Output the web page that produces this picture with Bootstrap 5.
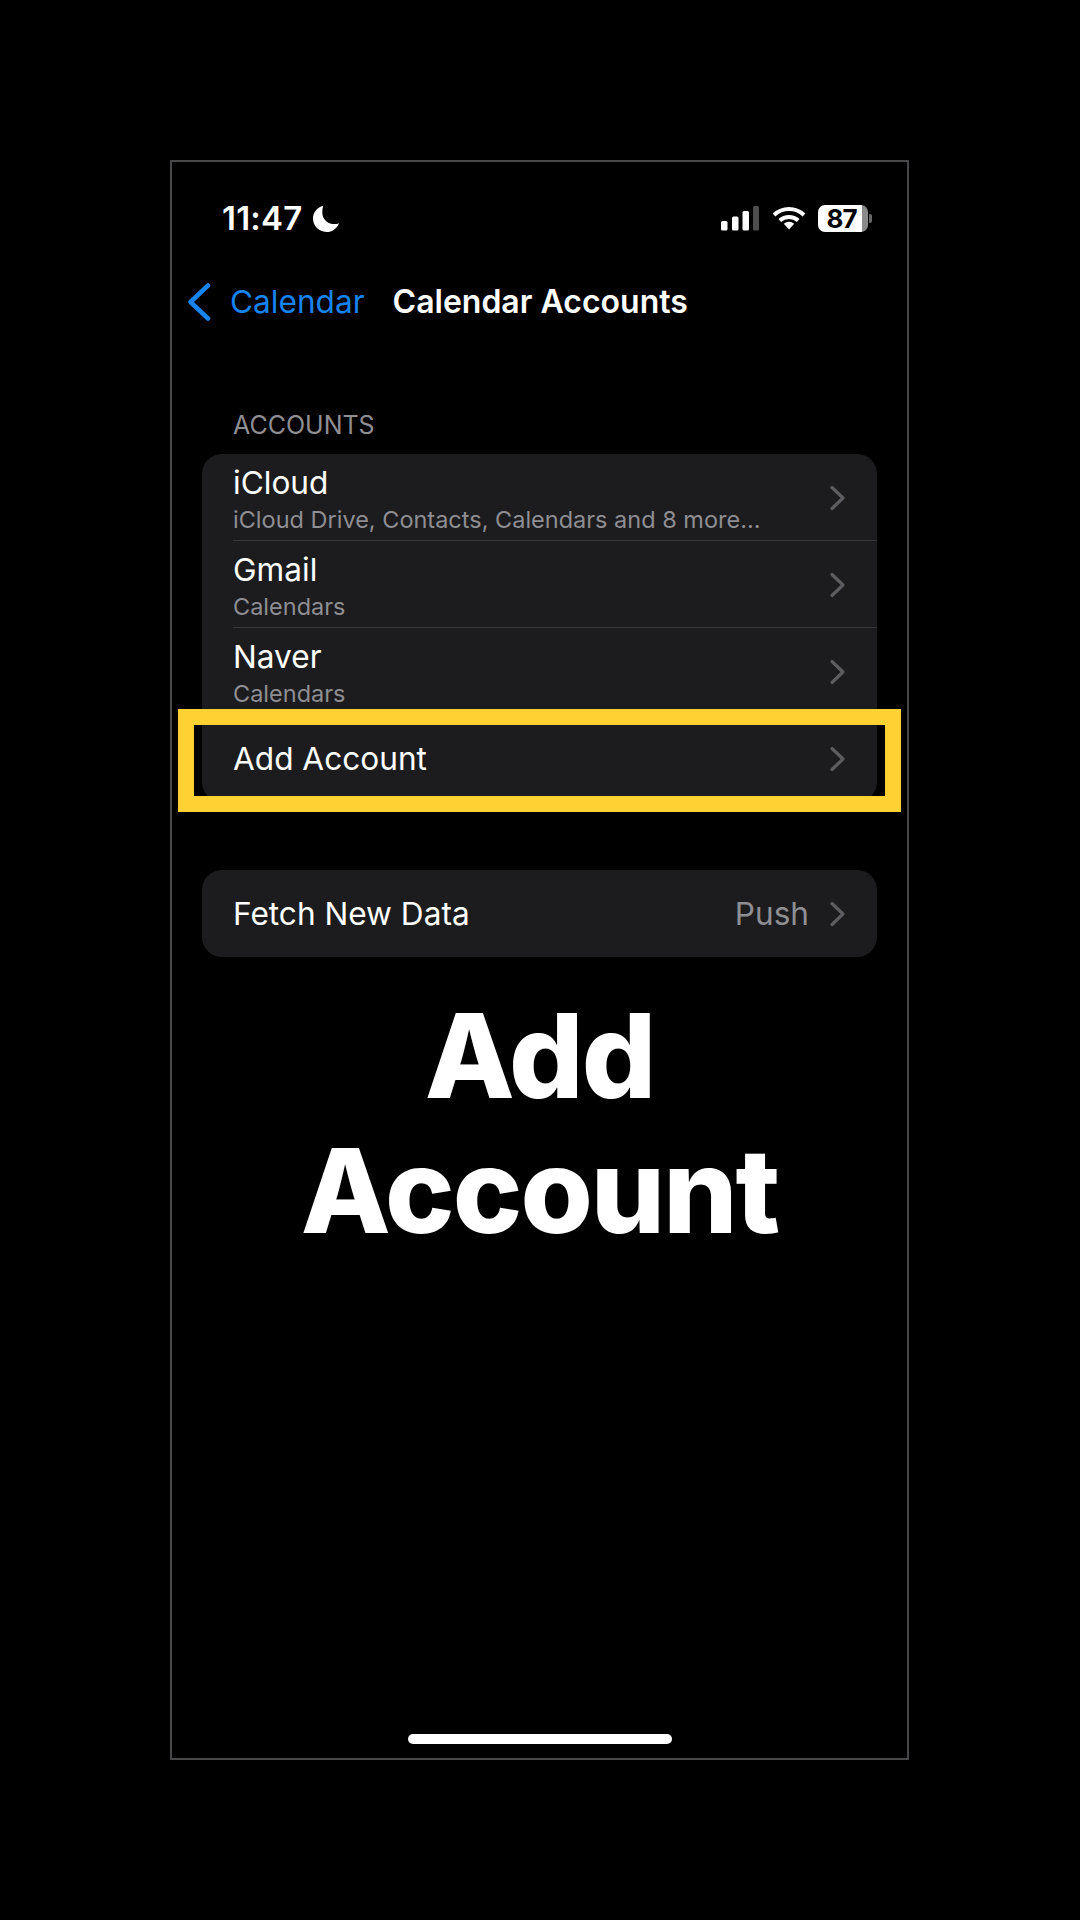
<!DOCTYPE html>
<html lang="en">
<head>
<meta charset="utf-8">
<title>Calendar Accounts</title>
<link href="https://cdn.jsdelivr.net/npm/bootstrap@5.3.0/dist/css/bootstrap.min.css" rel="stylesheet">
<style>
html,body{background:#000;height:1920px;}
body{font-family:Inter,"Liberation Sans",sans-serif;color:#fff;margin:0;overflow:hidden;}
.phone-frame{width:739px;height:1600px;margin:160px 0 0 170px;border:2px solid #47474a;}
.status-row{height:36px;margin-top:38px;padding:0 35px 0 50px;}
.clock{font-size:33px;font-weight:600;line-height:36px;letter-spacing:.2px;}
.moon-ico{width:27px;height:27px;margin-left:11px;}
.stat-gap-a{margin-left:13px;}
.stat-gap-b{margin-left:12px;}
.batt-shell{width:50px;height:27px;border-radius:7px;background:linear-gradient(90deg,#fff 44px,#8a8a8a 44px);color:#000;font-size:26px;font-weight:700;line-height:27px;text-align:center;letter-spacing:-1px;padding-right:3px;}
.batt-tip{width:3px;height:9px;background:#666;border-radius:0 2px 2px 0;margin-left:1px;}
.nav-line{height:40px;margin-top:46px;padding-left:15px;}
.nav-back{color:#1783ec;font-size:31.6px;line-height:40px;margin-left:19px;}
.nav-title{font-size:32px;font-weight:600;line-height:40px;margin-left:28px;}
.sect-label{color:#8e8e93;font-size:25px;line-height:30px;margin:88px 0 0 61px;}
.ios-group{margin:68px 30px 0 30px;background:#1c1c1e;border-radius:20px;overflow:hidden;}
.ios-row{background:transparent;border:0;color:#fff;height:87px;margin-left:31px;padding:9px 31px 0 0;border-bottom:1px solid #38383a;border-radius:0!important;}
.ios-row.single{padding-top:0;border-bottom:0;}
.ios-name{font-size:31.6px;line-height:40px;}
.ios-sub{font-size:23.5px;line-height:34px;color:#8e8e93;white-space:nowrap;}
.ios-val{font-size:31.6px;color:#8e8e93;line-height:40px;margin-right:20px;}
.chev{width:17px;height:26px;flex:none;}
.chev-low{margin-top:22px;}
.add-wrap{position:relative;}
.add-outline{position:absolute;left:-24px;right:-24px;top:-6px;bottom:-10px;border:16px solid #ffd133;pointer-events:none;}
.add-group{margin:14px 30px 0 30px;background:#1c1c1e;border-radius:20px;}
.headline{font-size:117px;font-weight:800;line-height:135px;text-align:center;margin:31px 0 0;letter-spacing:-2px;}
.home-bar{width:264px;height:10px;background:#fff;border-radius:5px;margin:auto auto 14px;}
</style>
</head>
<body>
<div class="phone-frame d-flex flex-column">
  <div class="status-row d-flex justify-content-between align-items-center">
    <div class="d-flex align-items-center">
      <span class="clock">11:47</span>
      <svg class="moon-ico" viewBox="0 0 25 25"><path fill="#fff" d="M9.5 0.8C4 2.2 0 6.9 0 12.6 0 19.4 5.5 25 12.4 25c5.4 0 10-3.4 11.7-8.2-1.2.5-2.7.8-4.2.8-6.6 0-11.3-4.8-11.3-11 0-2.2.3-4.1.9-5.8z"/></svg>
    </div>
    <div class="d-flex align-items-center">
      <svg width="38" height="25" viewBox="0 0 38 25"><rect x="0" y="15" width="6.5" height="9.5" rx="1.5" fill="#fff"/><rect x="11" y="10.5" width="6.5" height="14" rx="1.5" fill="#fff"/><rect x="21.5" y="5" width="6.5" height="19.5" rx="1.5" fill="#fff"/><rect x="32" y="0" width="6" height="24.5" rx="1.5" fill="#4d4d4d"/></svg>
      <svg class="stat-gap-a" width="34" height="24" viewBox="0 0 34 24"><path fill="none" stroke="#fff" stroke-width="4" d="M2 9C10.500 1 23.500 1 32 9"/><path fill="none" stroke="#fff" stroke-width="4" d="M7.800 14.500C13 9.800 21 9.800 26.200 14.500"/><path fill="#fff" d="M11.800 17.700C14.800 15 19.200 15 22.200 17.700L17 23.500z"/></svg>
      <div class="batt-shell stat-gap-b">87</div>
      <div class="batt-tip"></div>
    </div>
  </div>
  <div class="nav-line d-flex align-items-center">
    <svg width="24" height="38" viewBox="0 0 24 38"><polyline points="21,2.500 3.500,19 21,35.500" fill="none" stroke="#1783ec" stroke-width="4.500" stroke-linecap="round" stroke-linejoin="round"/></svg>
    <span class="nav-back">Calendar</span>
    <span class="nav-title">Calendar Accounts</span>
  </div>
  <div class="sect-label">ACCOUNTS</div>
  <div class="add-group">
    <div class="list-group list-group-flush">
      <div class="list-group-item ios-row d-flex justify-content-between align-items-start">
        <div><div class="ios-name">iCloud</div><div class="ios-sub">iCloud Drive, Contacts, Calendars and 8 more...</div></div>
        <svg class="chev chev-low" viewBox="0 0 17 26"><polyline points="3,2.500 14,13 3,23.500" fill="none" stroke="#5c5c61" stroke-width="3.200" stroke-linecap="round" stroke-linejoin="round"/></svg>
      </div>
      <div class="list-group-item ios-row d-flex justify-content-between align-items-start">
        <div><div class="ios-name">Gmail</div><div class="ios-sub">Calendars</div></div>
        <svg class="chev chev-low" viewBox="0 0 17 26"><polyline points="3,2.500 14,13 3,23.500" fill="none" stroke="#5c5c61" stroke-width="3.200" stroke-linecap="round" stroke-linejoin="round"/></svg>
      </div>
      <div class="list-group-item ios-row d-flex justify-content-between align-items-start">
        <div><div class="ios-name">Naver</div><div class="ios-sub">Calendars</div></div>
        <svg class="chev chev-low" viewBox="0 0 17 26"><polyline points="3,2.500 14,13 3,23.500" fill="none" stroke="#5c5c61" stroke-width="3.200" stroke-linecap="round" stroke-linejoin="round"/></svg>
      </div>
      <div class="add-wrap">
        <div class="list-group-item ios-row single d-flex justify-content-between align-items-center">
          <span class="ios-name">Add Account</span>
          <svg class="chev" viewBox="0 0 17 26"><polyline points="3,2.500 14,13 3,23.500" fill="none" stroke="#5c5c61" stroke-width="3.200" stroke-linecap="round" stroke-linejoin="round"/></svg>
        </div>
        <div class="add-outline"></div>
      </div>
    </div>
  </div>
  <div class="ios-group">
    <div class="list-group-item ios-row single d-flex align-items-center">
      <span class="ios-name me-auto">Fetch New Data</span>
      <span class="ios-val">Push</span>
      <svg class="chev" viewBox="0 0 17 26"><polyline points="3,2.500 14,13 3,23.500" fill="none" stroke="#5c5c61" stroke-width="3.200" stroke-linecap="round" stroke-linejoin="round"/></svg>
    </div>
  </div>
  <h1 class="headline">Add<br>Account</h1>
  <div class="home-bar"></div>
</div>
</body>
</html>
